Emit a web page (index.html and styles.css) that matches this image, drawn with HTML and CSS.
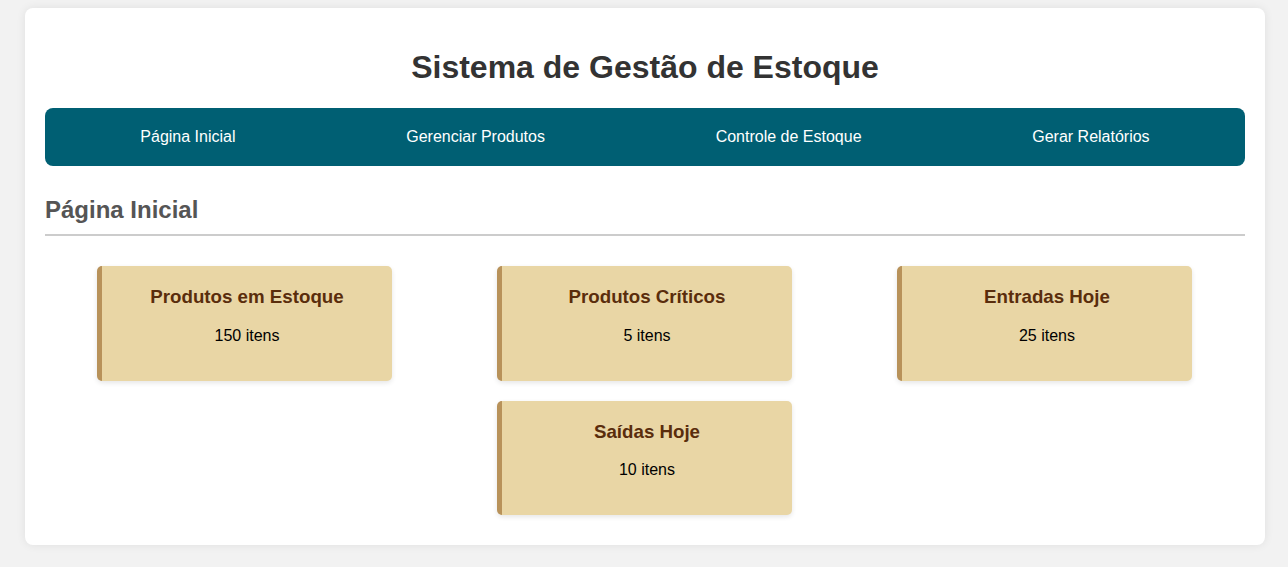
FILE: index.html
```html
<!DOCTYPE html>
<html lang="pt-BR">
<head>
<meta charset="utf-8">
<title>Sistema de Gestão de Estoque</title>
<link rel="stylesheet" href="styles.css">
</head>
<body>
<div class="container">
  <h1 class="title">Sistema de Gestão de Estoque</h1>
  <nav class="nav">
    <a href="#" class="nav-link">Página Inicial</a>
    <a href="#" class="nav-link">Gerenciar Produtos</a>
    <a href="#" class="nav-link">Controle de Estoque</a>
    <a href="#" class="nav-link">Gerar Relatórios</a>
  </nav>
  <h2 class="section-title">Página Inicial</h2>
  <div class="cards">
    <div class="card"><h3 class="card-title">Produtos em Estoque</h3><p class="card-value">150 itens</p></div>
    <div class="card"><h3 class="card-title">Produtos Críticos</h3><p class="card-value">5 itens</p></div>
    <div class="card"><h3 class="card-title">Entradas Hoje</h3><p class="card-value">25 itens</p></div>
    <div class="card"><h3 class="card-title">Saídas Hoje</h3><p class="card-value">10 itens</p></div>
  </div>
</div>
</body>
</html>
```
FILE: styles.css
```css
html, body {
  margin: 0;
  padding: 0;
}
body {
  background: #f2f2f2;
  font-family: "Liberation Sans", Arial, sans-serif;
  padding: 8px 23px 22px 25px;
}
.container {
  background: #ffffff;
  border-radius: 8px;
  padding: 20px;
  box-shadow: 0 0 10px rgba(0, 0, 0, 0.08);
}
.title {
  text-align: center;
  color: #333333;
  font-size: 32px;
  margin: 21px 0 22px;
}
.nav {
  background: #005f73;
  border-radius: 8px;
  padding: 10px;
  display: flex;
  justify-content: space-around;
}
.nav-link {
  color: #ffffff;
  text-decoration: none;
  font-size: 16px;
  padding: 10px 15px;
}
.section-title {
  color: #555555;
  font-size: 24px;
  margin: 30px 0 0;
  padding-bottom: 10px;
  border-bottom: 2px solid #cccccc;
}
.cards {
  display: flex;
  flex-wrap: wrap;
  justify-content: space-around;
  margin-top: 20px;
}
.card {
  box-sizing: border-box;
  width: 295px;
  margin: 10px 10px 10px 9px;
  padding: 20px;
  background: #e9d6a5;
  border-left: 5px solid #b8925a;
  border-radius: 5px;
  box-shadow: 0 2px 5px rgba(0, 0, 0, 0.1);
  text-align: center;
}
.card-title {
  margin: 0 0 18.72px;
  font-size: 18.72px;
  color: #5a2d0c;
}
.card-value {
  margin: 16px 0;
  font-size: 16px;
  color: #000000;
}
```
